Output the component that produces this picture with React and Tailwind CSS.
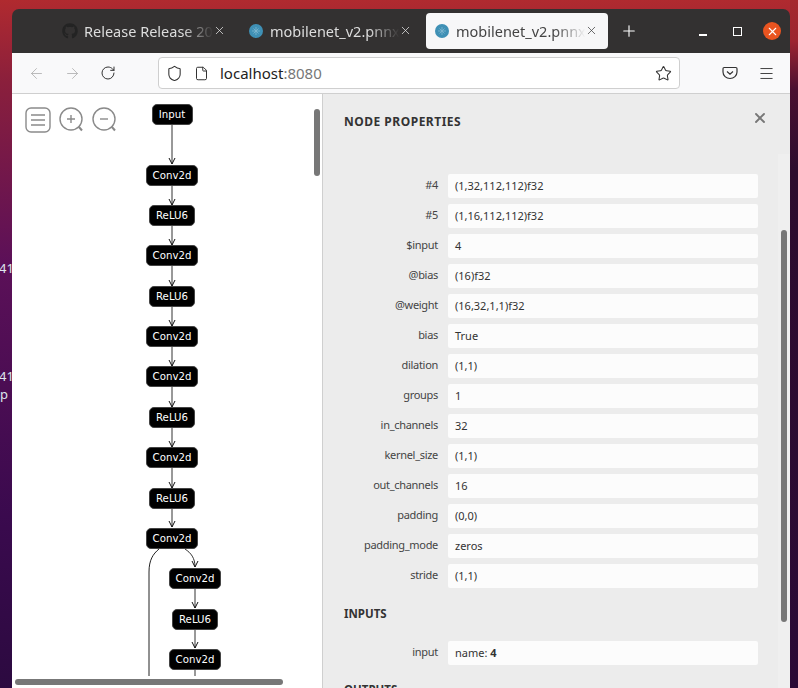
import React from "react";
import { ArrowLeft, ArrowRight, RotateCw, Shield, File, Star, X, Plus, Menu } from "lucide-react";
import { FaGithub } from "react-icons/fa";

const rows = [
  ["#4", "(1,32,112,112)f32"], ["#5", "(1,16,112,112)f32"], ["$input", "4"], ["@bias", "(16)f32"],
  ["@weight", "(16,32,1,1)f32"], ["bias", "True"], ["dilation", "(1,1)"], ["groups", "1"],
  ["in_channels", "32"], ["kernel_size", "(1,1)"], ["out_channels", "16"], ["padding", "(0,0)"],
  ["padding_mode", "zeros"], ["stride", "(1,1)"],
];

const NW = { Input: 41, Conv2d: 52, ReLU6: 46 };
const nodes = [
  ["Input", 172, 114], ["Conv2d", 172, 175], ["ReLU6", 172, 215], ["Conv2d", 172, 255], ["ReLU6", 172, 296],
  ["Conv2d", 172, 336], ["Conv2d", 172, 376], ["ReLU6", 172, 417], ["Conv2d", 172, 457], ["ReLU6", 172, 498],
  ["Conv2d", 172, 538], ["Conv2d", 195, 578], ["ReLU6", 195, 619], ["Conv2d", 195, 659],
];
const OY = 94;

function Tab({ active, icon, title }) {
  return (
    <div className={`relative flex h-[36px] w-[182px] items-center rounded-[4px] pl-[8px] ${active ? "bg-[#f7f7f8] text-[#444]" : "text-[#dddddd]"}`}>
      <span className="flex w-[16px] shrink-0 items-center justify-center">{icon}</span>
      <span className="ml-[6px] w-[132px] overflow-hidden whitespace-nowrap text-[14.5px] leading-[20px] [mask-image:linear-gradient(90deg,#000_75%,transparent_98%)]">{title}</span>
      <X size={13} strokeWidth={1.4} className={`absolute right-[10px] top-[11px] ${active ? "text-[#444]" : "text-[#e4e4e4]"}`} />
    </div>
  );
}

function Onnx() {
  return (
    <svg width="14" height="14" viewBox="0 0 14 14">
      <circle cx="7" cy="7" r="7" fill="#3f90b5" />
      <path d="M3 7h8M7 3v8M4.500 4.500l5 5M9.500 4.500l-5 5" stroke="#7fb7d0" strokeWidth="0.8" />
    </svg>
  );
}

function Graph() {
  return (
    <div className="relative h-full w-full overflow-hidden">
      <svg className="absolute left-0 top-0" width="310" height="582" viewBox="12 94 310 582" fill="none">
        <defs>
          <marker id="ah" markerUnits="userSpaceOnUse" markerWidth="8" markerHeight="8" refX="7" refY="4" orient="auto">
            <path d="M1 1 L7 4 L1 7" fill="none" stroke="#111" strokeWidth="1" />
          </marker>
        </defs>
        <g stroke="#333" strokeWidth="1">
          {[[172, 125, 164], [172, 186, 205], [172, 226, 245], [172, 266, 286], [172, 307, 326], [172, 347, 366], [172, 387, 407], [172, 428, 447], [172, 468, 488], [172, 509, 527], [195, 589, 608], [195, 630, 648]].map(([x, a, b]) => (
            <path key={a} d={`M${x} ${a}V${b}`} markerEnd="url(#ah)" />
          ))}
          <path d="M185 549C191 553 195 558 195 567" markerEnd="url(#ah)" />
          <path d="M159 549C153 554 149 560 149 572V676" stroke="#222" />
          <path d="M195 670V676" />
        </g>
      </svg>
      {nodes.map(([t, x, y], i) => (
        <div
          key={i}
          className="absolute flex h-[21px] items-center justify-center rounded-[5px] border border-[#444] bg-black text-[10.2px] text-white [font-family:'DejaVu_Sans',sans-serif]"
          style={{ left: x - NW[t] / 2 - 12, top: y - 10 - OY, width: NW[t] }}
        >
          {t}
        </div>
      ))}
      <div className="absolute left-[13px] top-[13px] flex items-center">
        <svg width="26" height="26" viewBox="0 0 26 26" fill="none" stroke="#8a8a8a" strokeWidth="1.4">
          <rect x="1" y="1" width="24" height="24" rx="5" />
          <path d="M6 8h14M6 13h14M6 18h14" />
        </svg>
        <svg className="ml-[8px]" width="25" height="26" viewBox="0 0 25 26" fill="none" stroke="#8a8a8a" strokeWidth="1.4">
          <circle cx="12" cy="12" r="11" />
          <path d="M8 12h8M12 8v8" />
          <path d="M19.500 19.500l3.500 4" strokeWidth="2" />
        </svg>
        <svg className="ml-[8px]" width="25" height="26" viewBox="0 0 25 26" fill="none" stroke="#8a8a8a" strokeWidth="1.4">
          <circle cx="12" cy="12" r="11" />
          <path d="M8 12h8" />
          <path d="M19.500 19.500l3.500 4" strokeWidth="2" />
        </svg>
      </div>
      <div className="absolute right-[2px] top-[15px] h-[67px] w-[6px] rounded-[3px] bg-[#777]" />
      <div className="absolute bottom-[3px] left-[3px] h-[6px] w-[268px] rounded-[3px] bg-[#777]" />
    </div>
  );
}

function Row({ label, children }) {
  return (
    <div className="flex h-[24px] items-center">
      <div className="w-[94px] pb-[2px] text-right text-[11px] tracking-[-0.3px] text-[#444]">{label}</div>
      <div className="ml-[10px] flex h-[24px] w-[310px] items-center rounded-[2px] bg-[#fcfcfc] px-[7px] text-[11px] text-[#333]">{children}</div>
    </div>
  );
}

export default function App() {
  return (
    <div className="relative flex h-[688px] w-[798px] overflow-hidden bg-[linear-gradient(180deg,#b02a2f_0%,#8a1f3c_12%,#5c1058_38%,#3a0a4e_75%,#2c0a40_100%)] [font-family:'Noto_Sans',sans-serif]">
      <div className="absolute left-[-1px] top-[259px] text-[13px] leading-[18px] text-[#dfe6ee]">41</div>
      <div className="absolute left-[-1px] top-[367px] text-[13px] leading-[18px] text-[#dfe6ee]">41</div>
      <div className="absolute left-[0px] top-[385px] text-[13px] leading-[18px] text-[#dfe6ee]">p</div>

      <div className="w-[12px] shrink-0" />
      <div className="flex h-full w-[778px] shrink-0 flex-col pt-[9px]">
        <div className="relative flex h-[44px] items-center rounded-t-[7px] bg-[#333131] pl-[42px]">
          <div className="flex gap-[4px]">
            <Tab icon={<FaGithub size={16} className="text-[#232323]" />} title="Release Release 2022" />
            <Tab icon={<Onnx />} title="mobilenet_v2.pnnx" />
            <Tab active icon={<Onnx />} title="mobilenet_v2.pnnx" />
          </div>
          <Plus size={18} strokeWidth={1.5} className="ml-[12px] text-white" />
          <div className="ml-auto flex items-center pr-[9px]">
            <div className="mr-[26px] mt-[8px] h-[1.5px] w-[8px] bg-white" />
            <div className="mr-[21px] h-[9px] w-[9px] border-[1.5px] border-white" />
            <div className="flex h-[18px] w-[18px] items-center justify-center rounded-full bg-[#e95420]">
              <X size={13} strokeWidth={2} className="text-white" />
            </div>
          </div>
        </div>

        <div className="flex h-[40px] items-center bg-[#f9f9fa] text-[#333]">
          <ArrowLeft size={17} strokeWidth={1.2} className="ml-[16px] text-[#b0b0b0]" />
          <ArrowRight size={17} strokeWidth={1.2} className="ml-[19px] text-[#b0b0b0]" />
          <RotateCw size={16} strokeWidth={1.5} className="ml-[19px] text-[#333]" />
          <div className="ml-[42px] flex h-[32px] w-[522px] items-center rounded-[4px] border border-[#cfcfcf] bg-white">
            <Shield size={17} strokeWidth={1.5} className="ml-[7px]" />
            <File size={15} strokeWidth={1.6} className="ml-[11px]" />
            <span className="ml-[11px] text-[15px] text-[#222]">localhost<span className="text-[#777]">:8080</span></span>
            <Star size={17} strokeWidth={1.5} className="ml-auto mr-[7px]" />
          </div>
          <svg className="ml-[42px]" width="16" height="16" viewBox="0 0 16 16" fill="none" stroke="#333" strokeWidth="1.2">
            <path d="M2.200 2.500h11.600c.8 0 1.200.4 1.200 1.200V7A7 6.500 0 0 1 1 7V3.700C1 2.900 1.400 2.500 2.200 2.500Z" />
            <path d="M5 6.500l3 2.600 3-2.600" />
          </svg>
          <Menu size={17} strokeWidth={1.3} className="ml-[20px]" />
        </div>

        <div className="flex min-h-0 flex-1 border-t border-[#cfcfcf]">
          <div className="relative h-full w-[310px] shrink-0 bg-white">
            <Graph />
          </div>
          <div className="relative h-full min-w-0 flex-1 overflow-hidden border-l border-[#cfcfcf] bg-[#ececec] pl-[21px]">
            <div className="flex h-[54px] items-start pt-[20px] text-[12px] font-bold leading-[16px] tracking-[0.5px] text-[#333]">NODE PROPERTIES</div>
            <X size={16} strokeWidth={2.8} className="absolute right-[22px] top-[16px] text-[#777]" />
            <div className="mt-[26px] flex flex-col gap-[6px]">
              {rows.map(([k, v]) => (
                <Row key={k} label={k}>{v}</Row>
              ))}
            </div>
            <div className="mt-[18px] text-[11.5px] font-bold leading-[16px] text-[#333]">INPUTS</div>
            <div className="mt-[19px]">
              <Row label="input"><span>name: <b>4</b></span></Row>
            </div>
            <div className="mt-[17px] text-[11.5px] font-bold leading-[16px] text-[#333]">OUTPUTS</div>
            <div className="absolute bottom-0 right-0 top-[60px] w-[12px] bg-[#efefef]">
              <div className="absolute left-[3px] top-[76px] h-[392px] w-[6px] rounded-[3px] bg-[#777]" />
            </div>
          </div>
        </div>
      </div>
      <div className="h-full w-[8px] shrink-0 bg-[linear-gradient(180deg,#a5282e_0%,#9c2430_6%,#4a1030_13%,#2d0c2d_25%,#2c0a36_100%)]" />
    </div>
  );
}
